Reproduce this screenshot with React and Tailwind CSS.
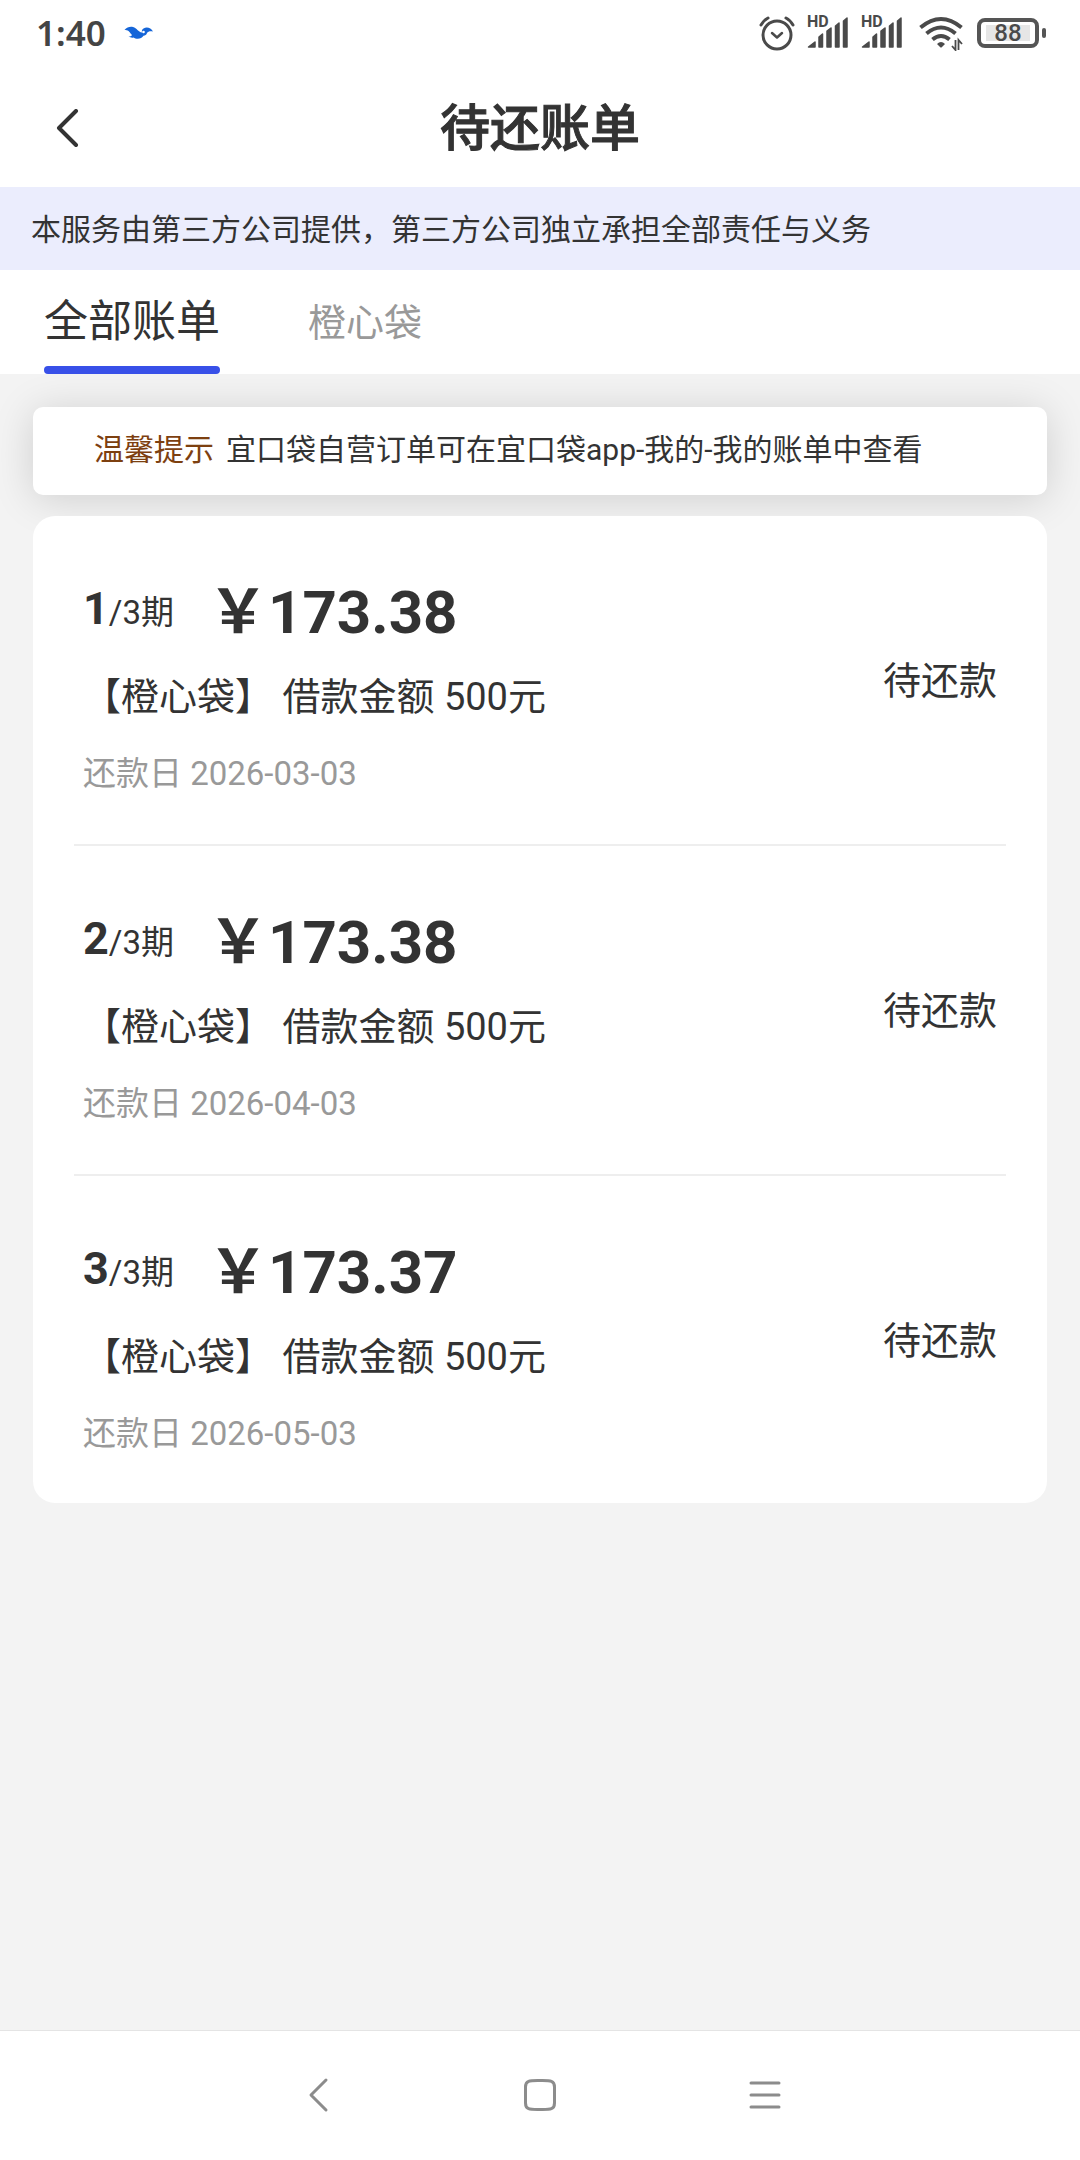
import React, { useState } from 'react';

const bills = [
  { period: 1, amount: '173.38', product: '橙心袋', loan: 500, dueDate: '2026-03-03', status: '待还款' },
  { period: 2, amount: '173.38', product: '橙心袋', loan: 500, dueDate: '2026-04-03', status: '待还款' },
  { period: 3, amount: '173.37', product: '橙心袋', loan: 500, dueDate: '2026-05-03', status: '待还款' },
];

const tabs = ['全部账单', '橙心袋'];

function SignalIcon() {
  return (
    <div className="relative h-8 w-[42px]">
      <span className="absolute -top-[3px] left-0 text-[16px] leading-[16px] font-bold">HD</span>
      <svg viewBox="0 0 42 32" className="h-8 w-[42px]" fill="currentColor" stroke="currentColor" strokeWidth="1.5" strokeLinejoin="round" aria-hidden="true">
        <path d="M1.500 30 L8 25 V30 Z" />
        <path d="M12 30 V20 L15.500 17 V30 Z" />
        <path d="M20 30 V14 L24 11 V30 Z" />
        <path d="M28.500 30 V9 L32 6 V30 Z" />
        <path d="M36.500 30 V4 L40 1 V30 Z" />
      </svg>
    </div>
  );
}

function StatusBar() {
  return (
    <div className="flex h-[66px] items-center justify-between pl-9 pr-[34px] text-[#4a4a4a]">
      <div className="flex items-center gap-[18px]">
        <span className="font-['Noto_Sans',sans-serif] text-[35px] leading-[48px] font-semibold text-[#444444]">1:40</span>
        <svg viewBox="0 0 30 14" className="h-[14px] w-[30px]" fill="#1565d8" aria-hidden="true">
          <path d="M0.500 4 C3 1 6 0.500 9 1 C13 2 14 6 18 6.500 C17.500 5 18 3.500 19.500 2.500 C23 0.500 27 2 29 5.500 C26.500 4.800 24 5.300 23 7 C22.500 9 21 9.500 19.500 9.800 C17.500 13.500 12 13.500 9.500 11.500 C8 12 6 11.500 4.500 10.500 C6 10.500 7.500 10 8 9 C6.500 8 6 6 4.500 5 C3.500 4 2 4 0.500 4 Z" />
          <circle cx="19.500" cy="6" r="1.300" fill="#ffffff" />
        </svg>
      </div>

      <div className="flex items-center">
        <svg viewBox="0 0 36 36" className="mr-3 size-9" fill="none" stroke="currentColor" strokeWidth="3" strokeLinecap="round" aria-hidden="true">
          <circle cx="18" cy="20" r="14" />
          <path d="M13 18 L18 22.500 L23 18" strokeWidth="2.500" strokeLinejoin="round" />
          <path d="M2 10 Q5 5 9 3 M34 10 Q31 5 27 3" />
        </svg>
        <div className="mr-3">
          <SignalIcon />
        </div>
        <SignalIcon />
        <svg viewBox="0 0 44 36" className="ml-4 h-9 w-11" fill="none" stroke="currentColor" strokeWidth="4" aria-hidden="true">
          <path d="M1.500 12.500 Q22 -4.500 42.500 12.500" />
          <path d="M7.500 18.500 Q22 6.500 36.500 18.500" />
          <path d="M13.500 24.500 Q22 17.500 30.500 24.500" />
          <path d="M18 29 Q22 25 26 29 L23 32 Q22 33 21 32 Z" fill="currentColor" stroke="none" />
          <path d="M36.500 25 V35 L33 31 M39.500 35 V25 L43 29" strokeWidth="1.800" />
        </svg>
        <div className="ml-[14px] flex items-center gap-[3px]">
          <div className="flex h-[30px] w-[62px] items-center justify-center rounded-lg border-4 border-[#555555]">
            <div className="flex h-4 w-11 items-center justify-center bg-[#e6e6e6] text-[24px] leading-4 font-medium">88</div>
          </div>
          <div className="h-[10px] w-1 rounded-xs bg-[#555555]" />
        </div>
      </div>
    </div>
  );
}

function BillItem({ bill, total }) {
  return (
    <li className="flex items-center justify-between border-b-2 border-[#eeeeee] px-[9px] pt-[57px] pb-[37px] last:border-b-0 last:pb-9">
      <div>
        <div className="flex items-start gap-[34px]">
          <p className="text-[33px] leading-[72px]">
            <b className="text-[45px]">{bill.period}</b>/{total}期
          </p>
          <p className="text-[60px] leading-[80px] font-bold">￥{bill.amount}</p>
        </div>
        <p className="text-[38px] leading-[88px]">【{bill.product}】 借款金额 {bill.loan}元</p>
        <p className="text-[33px] leading-[66px] text-[#999999]">
          还款日 <time dateTime={bill.dueDate}>{bill.dueDate}</time>
        </p>
      </div>
      <span className="pb-[18px] text-[38px] leading-[56px]">{bill.status}</span>
    </li>
  );
}

export default function App() {
  const [activeTab, setActiveTab] = useState(tabs[0]);

  const visibleBills = bills.filter((bill) => activeTab === tabs[0] || bill.product === activeTab);

  return (
    <div className="flex min-h-screen flex-col bg-[#f3f3f3] font-[Roboto,'Noto_Sans_CJK_SC',sans-serif] text-[#333333]">
      <div className="bg-white">
        <StatusBar />

        {/* Title bar */}
        <header className="grid h-[121px] grid-cols-[1fr_auto_1fr] items-center pt-1">
          <button type="button" aria-label="返回" className="ml-[54px] size-fit">
            <svg viewBox="0 0 28 40" className="h-10 w-7" fill="none" stroke="currentColor" strokeWidth="4" strokeLinecap="round" strokeLinejoin="round">
              <path d="M22 2 L5 19 L22 36" />
            </svg>
          </button>
          <h1 className="text-[50px] leading-[72px] font-medium [-webkit-text-stroke:1px]">待还账单</h1>
        </header>

        <p className="bg-[#ebedfd] px-[31px] pt-[22px] pb-5 text-[30px] leading-[41px]">
          本服务由第三方公司提供，第三方公司独立承担全部责任与义务
        </p>

        <nav className="flex h-[104px] items-stretch gap-[88px] px-11">
          {tabs.map((tab) => (
            <button
              key={tab}
              type="button"
              onClick={() => setActiveTab(tab)}
              className={
                tab === activeTab
                  ? 'flex flex-col justify-end text-[44px] leading-[88px]'
                  : 'flex flex-col justify-end text-[38px] leading-[102px] text-[#999999]'
              }
            >
              {tab}
              {tab === activeTab && <span className="h-2 w-full rounded-full bg-[#3850e8]" />}
            </button>
          ))}
        </nav>
      </div>

      <main className="flex-1 overflow-hidden px-[33px] pt-[33px] pb-8">
        <p className="flex gap-3 rounded-[10px] bg-white px-[61px] pt-[19px] pb-[21px] text-[30px] leading-[48px] shadow-[0_4px_40px_rgba(0,0,0,0.15)]">
          <span className="text-[#7d4010]">温馨提示</span>
          <span>宜口袋自营订单可在宜口袋app-我的-我的账单中查看</span>
        </p>

        <ul className="relative mt-[21px] rounded-[22px] bg-white px-[41px]">
          {visibleBills.map((bill) => (
            <BillItem key={bill.period} bill={bill} total={bills.length} />
          ))}
        </ul>
      </main>

      {/* System navigation */}
      <footer className="flex h-[130px] items-center justify-center gap-[188px] border-t border-[#e4e4e4] bg-white pb-[2px] text-[#8c8c8c]">
        <button type="button" aria-label="后退">
          <svg viewBox="0 0 36 36" className="size-9" fill="none" stroke="currentColor" strokeWidth="3" strokeLinecap="round" strokeLinejoin="round">
            <path d="M28 3 L13 18 L28 33" />
          </svg>
        </button>
        <button type="button" aria-label="主页">
          <svg viewBox="0 0 36 36" className="size-9" fill="none" stroke="currentColor" strokeWidth="3">
            <path d="M18 3.500 C28 3.500 32.500 3 32.500 10 V26 C32.500 33 28 32.500 18 32.500 C8 32.500 3.500 33 3.500 26 V10 C3.500 3 8 3.500 18 3.500 Z" />
          </svg>
        </button>
        <button type="button" aria-label="最近任务">
          <svg viewBox="0 0 36 36" className="size-9" fill="none" stroke="currentColor" strokeWidth="3" strokeLinecap="round">
            <path d="M5 6 H33 M5 18 H33 M5 30 H33" />
          </svg>
        </button>
      </footer>
    </div>
  );
}
